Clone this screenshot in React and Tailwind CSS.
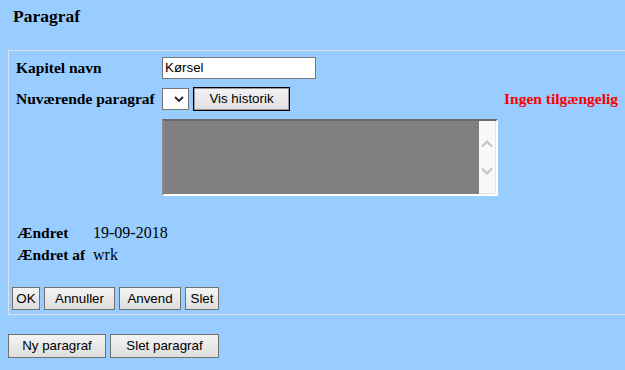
import React from "react";

const btn =
  "h-[23px] border border-[#707070] bg-gradient-to-b from-[#f4f4f4] to-[#dedede] text-[13.33px] text-black leading-none flex items-center justify-center";

function ScrollArrow({ up }) {
  return (
    <svg width="12" height="9" viewBox="0 0 12 9" className="block">
      <path
        d={up ? "M1 7.5 L6 2.5 L11 7.5" : "M1 1.5 L6 6.5 L11 1.5"}
        fill="none"
        stroke="#c4c4c4"
        strokeWidth="2.2"
      />
    </svg>
  );
}

export default function App() {
  return (
    <div className="w-[625px] h-[370px] overflow-hidden bg-[#99ccff] text-black font-['Liberation_Serif',serif]">
      <div className="h-[50px] pl-[13px] pt-[6px]">
        <h1 className="text-[17.5px] leading-[20px] font-bold">Paragraf</h1>
      </div>

      <div className="ml-[8px] w-[640px] h-[265px] border border-[#dde3ea] flex flex-col">
        <div className="pl-[7px] pt-[6px] grid grid-cols-[146px_342px_1fr] gap-y-[8px] items-center">
          <div className="text-[15.5px] font-bold leading-[22px]">Kapitel navn</div>
          <div className="h-[22px] w-[154px] border border-[#767676] bg-white pl-[2px] flex items-center font-['Liberation_Sans',sans-serif] text-[13.33px]">
            Kørsel
          </div>
          <div />

          <div className="text-[15.5px] font-bold leading-[24px] whitespace-nowrap">Nuværende paragraf</div>
          <div className="flex items-center gap-[4px] h-[24px]">
            <div className="h-[22px] w-[27px] border border-[#767676] bg-white flex items-center justify-end pr-[4px]">
              <svg width="10" height="6" viewBox="0 0 10 6">
                <path d="M1 1 L5 5 L9 1" fill="none" stroke="#222" strokeWidth="1.8" />
              </svg>
            </div>
            <button className="h-[24px] w-[97px] border border-black shadow-[inset_0_0_0_1px_#9a9a9a] bg-gradient-to-b from-[#f4f4f4] to-[#dedede] text-[13.33px] leading-none font-['Liberation_Sans',sans-serif]">
              Vis historik
            </button>
          </div>
          <div className="text-[15.5px] font-bold text-[#ff0000] whitespace-nowrap leading-[24px]">
            Ingen tilgængelig
          </div>

          <div />
          <div className="h-[77px] w-[336px] border-2 border-t-[#6a6a6a] border-l-[#8a8a8a] border-r-white border-b-white bg-[#808080] flex justify-end">
            <div className="w-[17px] bg-[#f8f8f8] border-r border-b border-[#e4e4e4] flex flex-col items-center pt-[18px] gap-[19px]">
              <ScrollArrow up />
              <ScrollArrow />
            </div>
          </div>
          <div />
        </div>

        <div className="pl-[8px] mt-[26px] grid grid-cols-[76px_1fr] leading-[22px]">
          <div className="font-bold text-[15.5px]">Ændret</div>
          <div className="text-[16px]">19-09-2018</div>
          <div className="font-bold text-[15.5px]">Ændret af</div>
          <div className="text-[16px]">wrk</div>
        </div>

        <div className="pl-[3px] mt-[21px] flex gap-[4px] font-['Liberation_Sans',sans-serif]">
          <button className={`${btn} w-[28px]`}>OK</button>
          <button className={`${btn} w-[71px]`}>Annuller</button>
          <button className={`${btn} w-[62px]`}>Anvend</button>
          <button className={`${btn} w-[34px]`}>Slet</button>
        </div>
      </div>

      <div className="ml-[8px] mt-[19px] flex gap-[4px] font-['Liberation_Sans',sans-serif]">
        <button className={`${btn} h-[24px] w-[98px]`}>Ny paragraf</button>
        <button className={`${btn} h-[24px] w-[109px]`}>Slet paragraf</button>
      </div>
    </div>
  );
}
